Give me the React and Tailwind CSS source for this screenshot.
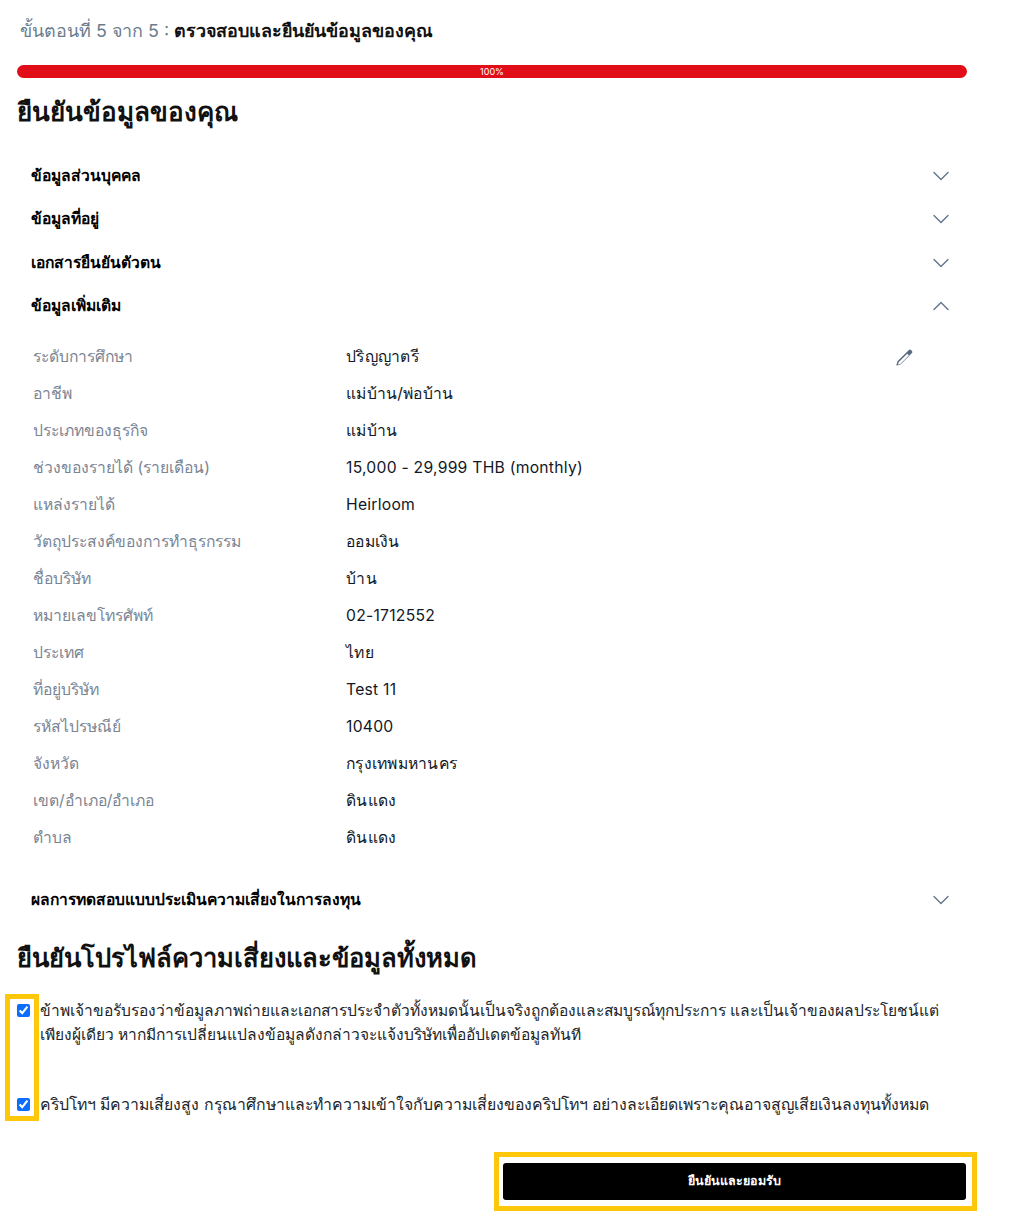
import React from "react";
import { ChevronDown, ChevronUp } from "lucide-react";

const rows = [
  ["ระดับการศึกษา", "ปริญญาตรี"],
  ["อาชีพ", "แม่บ้าน/พ่อบ้าน"],
  ["ประเภทของธุรกิจ", "แม่บ้าน"],
  ["ช่วงของรายได้ (รายเดือน)", "15,000 - 29,999 THB (monthly)"],
  ["แหล่งรายได้", "Heirloom"],
  ["วัตถุประสงค์ของการทำธุรกรรม", "ออมเงิน"],
  ["ชื่อบริษัท", "บ้าน"],
  ["หมายเลขโทรศัพท์", "02-1712552"],
  ["ประเทศ", "ไทย"],
  ["ที่อยู่บริษัท", "Test 11"],
  ["รหัสไปรษณีย์", "10400"],
  ["จังหวัด", "กรุงเทพมหานคร"],
  ["เขต/อำเภอ/อำเภอ", "ดินแดง"],
  ["ตำบล", "ดินแดง"],
];

function Header({ title, open }) {
  const Icon = open ? ChevronUp : ChevronDown;
  return (
    <div className="flex h-[43.5px] items-center justify-between pl-[14px] pr-[12px]">
      <span className="pb-[1px] text-[15.6px] font-semibold text-black">{title}</span>
      <Icon className="w-[28px] h-[28px] text-[#64748b]" strokeWidth={1.2} />
    </div>
  );
}

export default function App() {
  return (
    <div className="relative w-[1029px] h-[1218px] bg-white overflow-hidden font-['Inter','Noto_Sans',sans-serif]">
      <div className="w-[950px] ml-[17px]">
        <p className="pt-[18px] pl-[3px] h-[65px] text-[17.9px] leading-[26px] text-[#6b7c8c]">
          ขั้นตอนที่ 5 จาก 5 : <span className="font-bold text-[#111]">ตรวจสอบและยืนยันข้อมูลของคุณ</span>
        </p>
        <div className="h-[13px] rounded-full bg-[#e10e19] flex items-center justify-center text-[9px] leading-[13px] text-white">
          100%
        </div>
        <h2 className="mt-[17px] h-[59px] text-[26px] leading-[34px] font-bold text-[#111]">ยืนยันข้อมูลของคุณ</h2>

        <Header title="ข้อมูลส่วนบุคคล" />
        <Header title="ข้อมูลที่อยู่" />
        <Header title="เอกสารยืนยันตัวตน" />
        <Header title="ข้อมูลเพิ่มเติม" open />

        <div className="relative pl-[16px] pt-[10px] pb-[22px]">
          {rows.map(([k, v]) => (
            <div key={k} className="flex h-[37px] items-center text-[15.7px]">
              <span className="w-[313px] text-[#7a8594]">{k}</span>
              <span className="text-[#111827] tracking-[0.25px]">{v}</span>
            </div>
          ))}
          <svg viewBox="0 0 16 16" className="absolute left-[878px] top-[21px] w-[18px] h-[18px] text-[#5b6b7f]" fill="currentColor">
            <path d="M12.15 1.15a1.7 1.7 0 0 1 2.4 0l.3.3a1.7 1.7 0 0 1 0 2.4L5.2 13.5a1 1 0 0 1-.42.25l-3.1.9a.35.35 0 0 1-.43-.43l.9-3.1a1 1 0 0 1 .25-.42l9.75-9.55Zm-8.9 10.6-.6 2.1 2.1-.6 7.6-7.6-1.5-1.5-7.6 7.6Z" />
          </svg>
        </div>

        <Header title="ผลการทดสอบแบบประเมินความเสี่ยงในการลงทุน" />

        <h2 className="mt-[19px] h-[46px] text-[25.5px] leading-[34px] font-bold text-[#111]">ยืนยันโปรไฟล์ความเสี่ยงและข้อมูลทั้งหมด</h2>

        <div className="flex items-start gap-[10px] pt-[12px] h-[106px]">
          <input type="checkbox" checked readOnly className="mt-[5px] w-[13px] h-[13px] shrink-0 accent-[#0d6efd]" />
          <p className="text-[15.55px] leading-[24px] text-[#212529]">
            ข้าพเจ้าขอรับรองว่าข้อมูลภาพถ่ายและเอกสารประจำตัวทั้งหมดนั้นเป็นจริงถูกต้องและสมบูรณ์ทุกประการ และเป็นเจ้าของผลประโยชน์แต่
            <br />
            เพียงผู้เดียว หากมีการเปลี่ยนแปลงข้อมูลดังกล่าวจะแจ้งบริษัทเพื่ออัปเดตข้อมูลทันที
          </p>
        </div>
        <div className="flex items-start gap-[10px]">
          <input type="checkbox" checked readOnly className="mt-[5px] w-[13px] h-[13px] shrink-0 accent-[#0d6efd]" />
          <p className="text-[15.8px] leading-[24px] text-[#212529]">
            คริปโทฯ มีความเสี่ยงสูง กรุณาศึกษาและทำความเข้าใจกับความเสี่ยงของคริปโทฯ อย่างละเอียดเพราะคุณอาจสูญเสียเงินลงทุนทั้งหมด
          </p>
        </div>

        <div className="flex justify-end mt-[46px] pr-[1px]">
          <button className="w-[463px] h-[37px] rounded-[3px] bg-black text-white text-[12.5px] font-semibold">ยืนยันและยอมรับ</button>
        </div>
      </div>

      <div className="absolute left-[5px] top-[994px] w-[34px] h-[127px] border-[5px] border-[#ffc709]" />
      <div className="absolute left-[494px] top-[1152px] w-[483px] h-[59px] border-[5px] border-[#ffc709]" />
    </div>
  );
}
